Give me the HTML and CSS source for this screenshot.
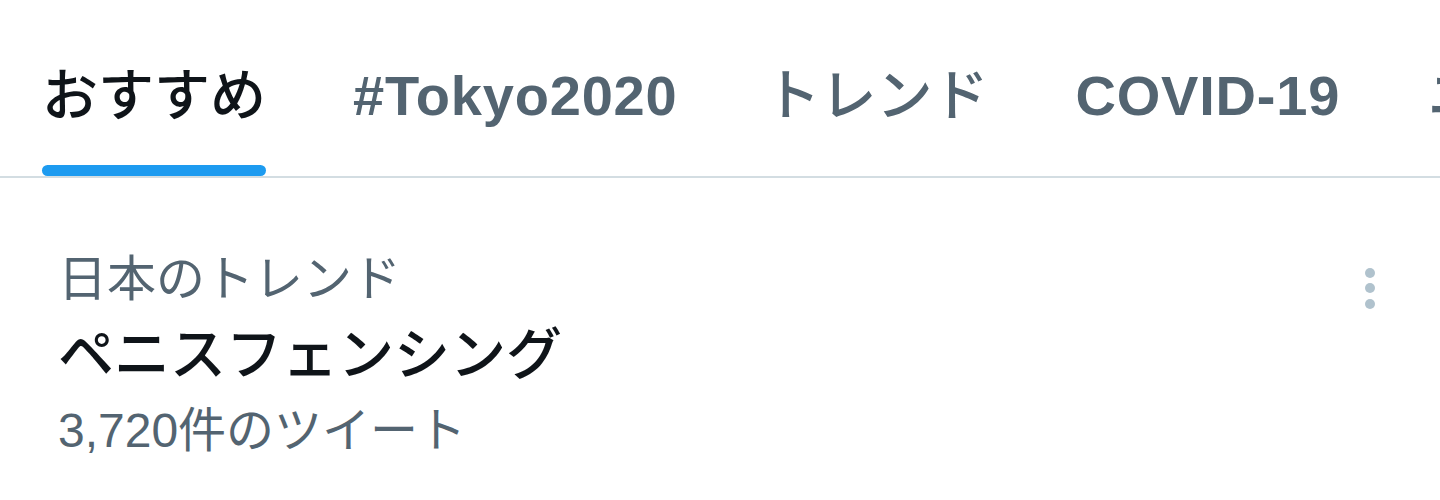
FILE: index.html
```html
<!DOCTYPE html>
<html lang="ja">
<head>
  <meta charset="UTF-8">
  <title>Explore</title>
  <link rel="stylesheet" href="styles.css">
</head>
<body>

  <nav class="tabs">
    <div class="tab active">おすすめ</div>
    <div class="tab latin">#Tokyo2020</div>
    <div class="tab">トレンド</div>
    <div class="tab latin">COVID-19</div>
    <div class="tab">ニュース</div>
  </nav>

  <div class="trend">
    <div class="trend-body">
      <div class="trend-meta">日本のトレンド</div>
      <div class="trend-name">ペニスフェンシング</div>
      <div class="trend-count">3,720件のツイート</div>
    </div>
    <svg class="more" width="12" height="44" viewBox="0 0 12 44">
      <circle cx="6" cy="6" r="5"></circle>
      <circle cx="6" cy="21" r="5"></circle>
      <circle cx="6" cy="37" r="5"></circle>
    </svg>
  </div>

</body>
</html>
```

FILE: styles.css
```css
body {
  margin: 0;
  font-family: "Liberation Sans", "Noto Sans CJK JP", sans-serif;
  background: #fff;
  color: #0f1419;
  overflow: hidden;
}

.tabs {
  display: flex;
  height: 176px;
  border-bottom: 2px solid #d3dde2;
  white-space: nowrap;
  overflow: hidden;
  padding-left: 42px;
}

.tab {
  display: flex;
  flex-direction: column;
  flex-shrink: 0;
  margin-right: 87px;
  padding-top: 60px;
  font-family: "Liberation Sans", "Noto Sans CJK JP Medium", "Noto Sans CJK JP", sans-serif;
  font-size: 56px;
  line-height: 72px;
  font-weight: 500;
  color: #536471;
}

.tab.latin {
  font-weight: bold;
  letter-spacing: 0.8px;
}

.tab.active {
  color: #0f1419;
}

.tab.active::after {
  content: "";
  margin-top: auto;
  height: 11px;
  border-radius: 6px;
  background: #1d9bf0;
}

.trend {
  display: flex;
  justify-content: space-between;
  padding: 65px 64px 0 58px;
}

.trend-meta,
.trend-count {
  font-size: 48px;
  line-height: 72px;
  color: #536471;
}

.trend-meta {
  font-size: 49px;
}

.trend-name {
  font-family: "Liberation Sans", "Noto Sans CJK JP Medium", "Noto Sans CJK JP", sans-serif;
  font-size: 56px;
  line-height: 80px;
  font-weight: 500;
  color: #0f1419;
}

.more {
  margin-top: 24px;
  fill: #b0c2cd;
}
```
